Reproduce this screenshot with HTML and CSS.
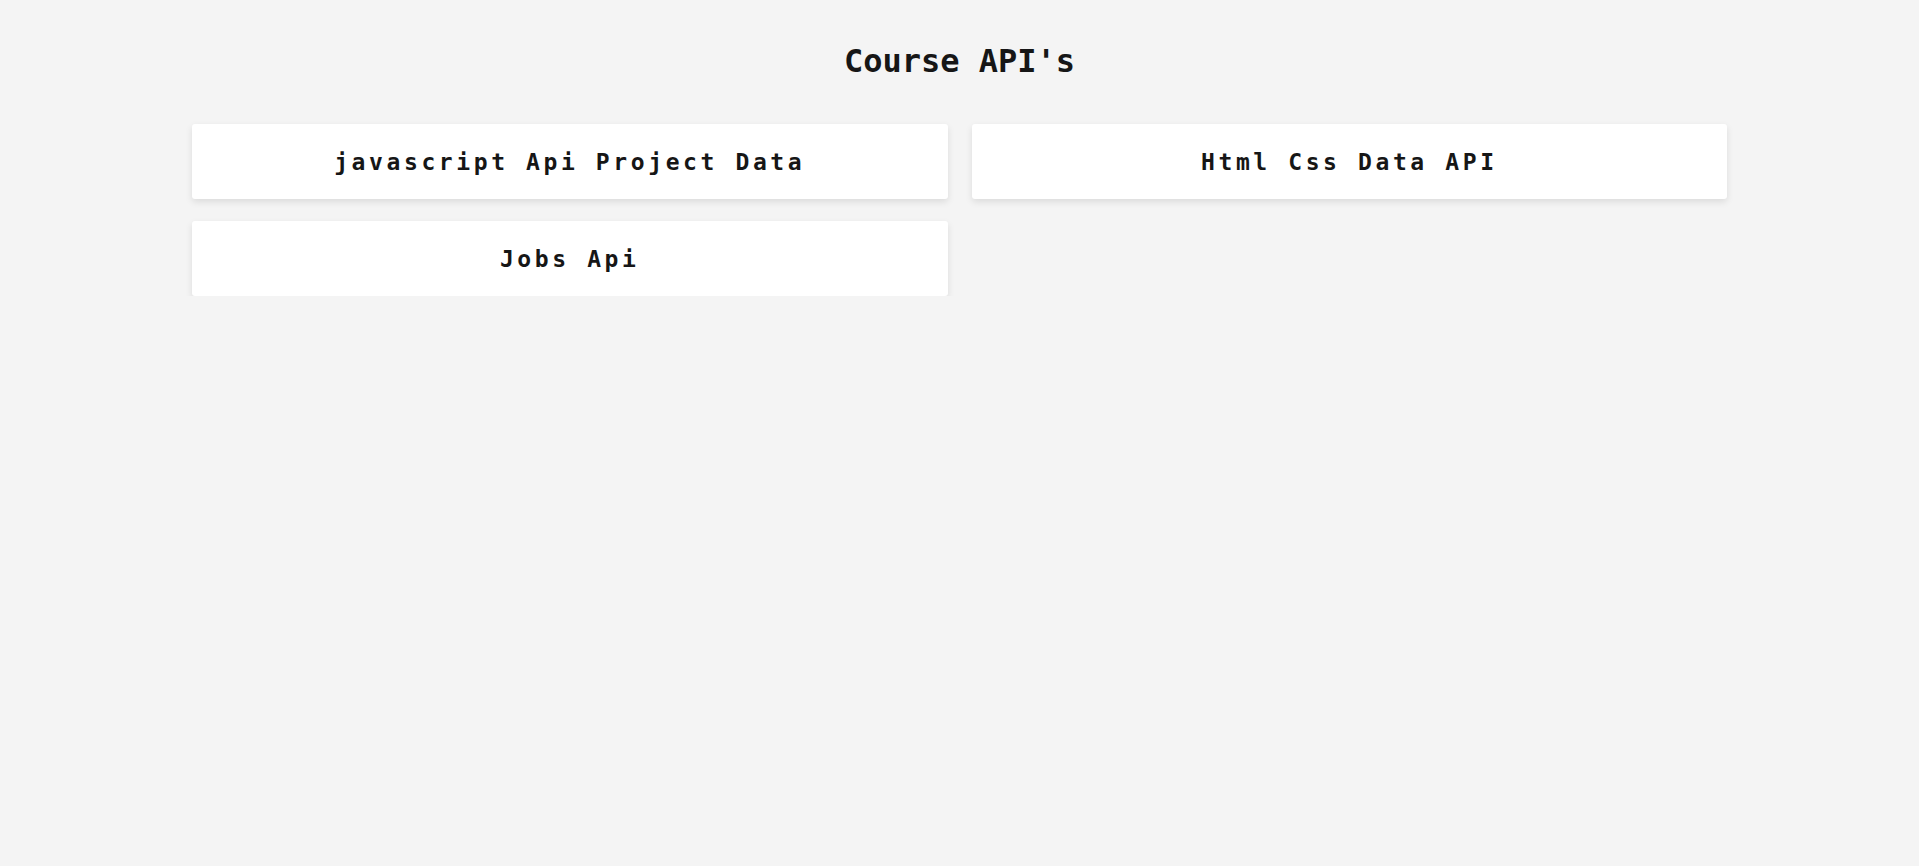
FILE: index.html
```html
<!DOCTYPE html>
<html lang="en">
<head>
<meta charset="utf-8">
<title>Course API's</title>
<link rel="stylesheet" href="styles.css">
</head>
<body>
<h1 class="title">Course API's</h1>
<main class="grid">
  <a class="card" href="#">javascript Api Project Data</a>
  <a class="card" href="#">Html Css Data API</a>
  <a class="card" href="#">Jobs Api</a>
</main>
</body>
</html>
```
FILE: styles.css
```css
body {
  margin: 0;
  background: #f4f4f4;
  font-family: "DejaVu Sans Mono", "Liberation Mono", monospace;
  color: #161616;
}
.title {
  margin: 0;
  padding-top: 42px;
  line-height: 38px;
  font-size: 32px;
  font-weight: bold;
  text-align: center;
}
.grid {
  width: 80%;
  margin: 44px auto 0;
  display: grid;
  grid-template-columns: 1fr 1fr;
  column-gap: 24px;
  row-gap: 22px;
}
.card {
  display: flex;
  align-items: center;
  justify-content: center;
  height: 75px;
  background: #fff;
  border-radius: 3px;
  box-shadow: 0 3px 7px rgba(0, 0, 0, 0.1);
  font-size: 23px;
  font-weight: bold;
  letter-spacing: 3.6px;
  color: #161616;
  text-decoration: none;
}
```
